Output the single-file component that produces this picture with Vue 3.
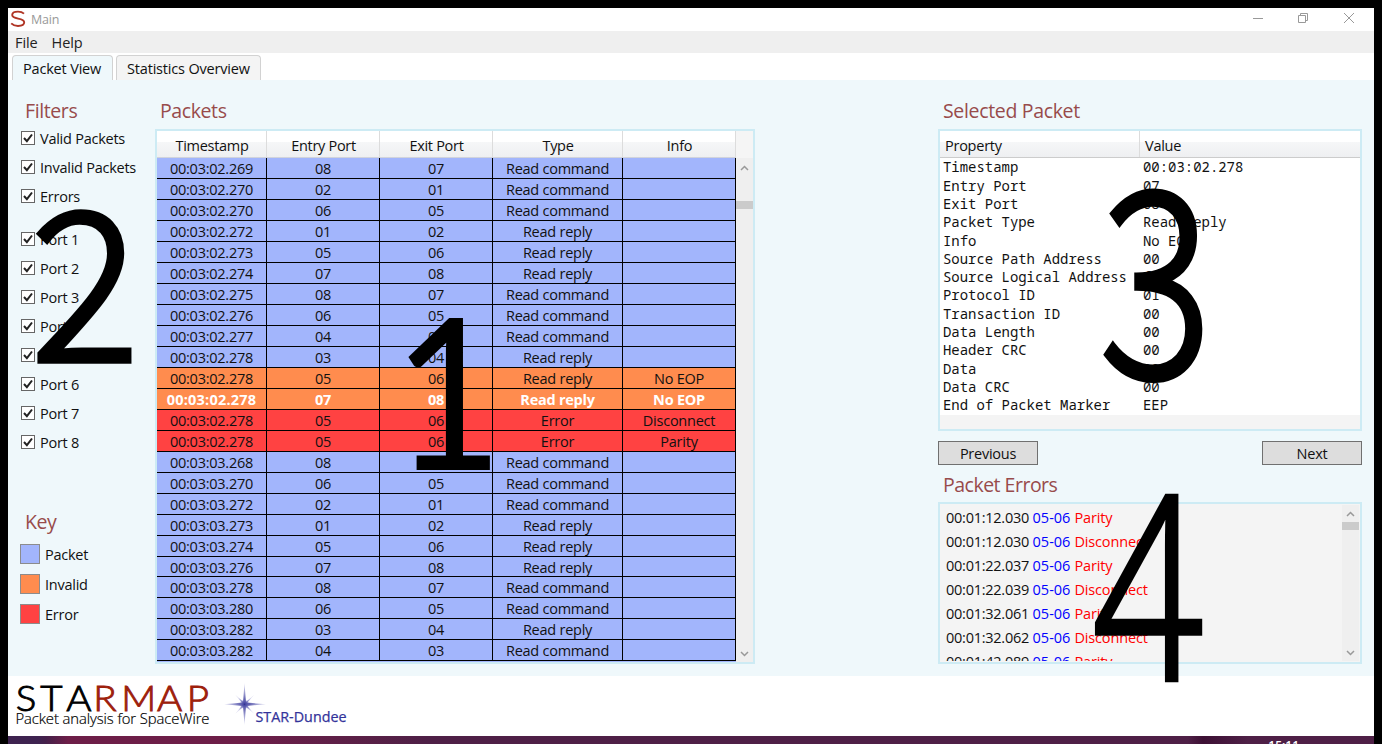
<script setup>
const filters = ['Valid Packets', 'Invalid Packets', 'Errors']
const ports = [1, 2, 3, 4, 5, 6, 7, 8].map((n) => `Port ${n}`)
const keys = [
  { label: 'Packet', kind: 'packet' },
  { label: 'Invalid', kind: 'invalid' },
  { label: 'Error', kind: 'error' },
]
const headers = ['Timestamp', 'Entry Port', 'Exit Port', 'Type', 'Info']
const C = 'Read command'
const R = 'Read reply'
const packets = [
  ['02.269', '08', '07', C],
  ['02.270', '02', '01', C],
  ['02.270', '06', '05', C],
  ['02.272', '01', '02', R],
  ['02.273', '05', '06', R],
  ['02.274', '07', '08', R],
  ['02.275', '08', '07', C],
  ['02.276', '06', '05', C],
  ['02.277', '04', '03', C],
  ['02.278', '03', '04', R],
  ['02.278', '05', '06', R, 'No EOP', 'invalid'],
  ['02.278', '07', '08', R, 'No EOP', 'invalid selected'],
  ['02.278', '05', '06', 'Error', 'Disconnect', 'error'],
  ['02.278', '05', '06', 'Error', 'Parity', 'error'],
  ['03.268', '08', '07', C],
  ['03.270', '06', '05', C],
  ['03.272', '02', '01', C],
  ['03.273', '01', '02', R],
  ['03.274', '05', '06', R],
  ['03.276', '07', '08', R],
  ['03.278', '08', '07', C],
  ['03.280', '06', '05', C],
  ['03.282', '03', '04', R],
  ['03.282', '04', '03', C],
].map(([t, a, b, type, info = '', kind = 'packet']) => ({ cells: ['00:03:' + t, a, b, type, info], kind }))
const props = [
  ['Timestamp', '00:03:02.278'],
  ['Entry Port', '07'],
  ['Exit Port', '08'],
  ['Packet Type', 'Read reply'],
  ['Info', 'No EOP'],
  ['Source Path Address', '00'],
  ['Source Logical Address', 'fe'],
  ['Protocol ID', '01'],
  ['Transaction ID', '00'],
  ['Data Length', '00'],
  ['Header CRC', '00'],
  ['Data', '00'],
  ['Data CRC', '00'],
  ['End of Packet Marker', 'EEP'],
]
const errors = [
  ['00:01:12.030', 'Parity'],
  ['00:01:12.030', 'Disconnect'],
  ['00:01:22.037', 'Parity'],
  ['00:01:22.039', 'Disconnect'],
  ['00:01:32.061', 'Parity'],
  ['00:01:32.062', 'Disconnect'],
  ['00:01:42.089', 'Parity'],
]
</script>

<template>
  <div class="screen">
    <div class="window">
      <header class="titlebar">
        <svg class="app-icon" width="16" height="18" viewBox="0 0 16 18">
          <path d="M14 3.6C12.500 2.200 10.400 1.600 8 1.600C4.500 1.600 2.200 3 2.200 5C2.200 9.800 14.200 7.400 14.200 12.300C14.200 14.500 11.700 16 8 16C5.200 16 2.900 15.100 1.200 13.400" fill="none" stroke="#b03525" stroke-width="1.900" />
        </svg>
        <span class="title">Main</span>
        <svg class="controls" width="110" height="20" viewBox="0 0 110 20" fill="none" stroke="#999">
          <path d="M3 10.500H13" />
          <path d="M48.500 7.500H55.500V14.500H48.500ZM50.500 7V5.500H57.500V12.500H56" />
          <path d="M94 5L104 15M104 5L94 15" />
        </svg>
      </header>
      <nav class="menu"><span>File</span><span>Help</span></nav>
      <div class="tabs">
        <div class="tab active">Packet View</div>
        <div class="tab second">Statistics Overview</div>
      </div>

      <main class="content">
        <aside class="side">
          <h2>Filters</h2>
          <div class="checks">
            <label v-for="f in filters" :key="f" class="check">
              <svg width="14" height="14" viewBox="0 0 14 14"><rect x=".5" y=".5" width="13" height="13" fill="#fff" stroke="#666" /><path d="M3 7L5.900 10.200L11 3.500" fill="none" stroke="#222" stroke-width="2" /></svg>
              <span>{{ f }}</span>
            </label>
          </div>
          <div class="checks ports">
            <label v-for="f in ports" :key="f" class="check">
              <svg width="14" height="14" viewBox="0 0 14 14"><rect x=".5" y=".5" width="13" height="13" fill="#fff" stroke="#666" /><path d="M3 7L5.900 10.200L11 3.500" fill="none" stroke="#222" stroke-width="2" /></svg>
              <span>{{ f }}</span>
            </label>
          </div>
          <h2 class="key-title">Key</h2>
          <div class="keys">
            <div v-for="k in keys" :key="k.label" class="key"><i :class="k.kind"></i><span>{{ k.label }}</span></div>
          </div>
        </aside>

        <section class="packets">
          <h2>Packets</h2>
          <div class="frame packet-frame">
            <div class="grid">
              <div class="row head"><div v-for="h in headers" :key="h">{{ h }}</div></div>
              <div v-for="(p, i) in packets" :key="i" class="row" :class="p.kind">
                <div v-for="(c, j) in p.cells" :key="j">{{ c }}</div>
              </div>
            </div>
            <div class="scroll">
              <div class="scroll-top"></div>
              <svg class="arrow" width="9" height="6" viewBox="0 0 9 6"><path d="M1 5L4.500 1.500L8 5" fill="none" stroke="#999" stroke-width="1.500" /></svg>
              <div class="thumb far"></div>
              <svg class="arrow down" width="9" height="6" viewBox="0 0 9 6"><path d="M1 1L4.500 4.500L8 1" fill="none" stroke="#999" stroke-width="1.500" /></svg>
            </div>
          </div>
        </section>

        <section class="details">
          <h2>Selected Packet</h2>
          <div class="frame prop-frame">
            <div class="prop-head"><span>Property</span><span>Value</span></div>
            <div class="prop-body">
              <div v-for="p in props" :key="p[0]" class="prop"><span>{{ p[0] }}</span><span>{{ p[1] }}</span></div>
            </div>
          </div>
          <div class="buttons"><button>Previous</button><button>Next</button></div>
          <h2 class="err-title">Packet Errors</h2>
          <div class="frame err-frame">
            <div class="err-list">
              <div v-for="(e, i) in errors" :key="i" class="err">{{ e[0] }} <b>05-06</b> <em>{{ e[1] }}</em></div>
            </div>
            <div class="scroll err-scroll">
              <svg class="arrow" width="9" height="6" viewBox="0 0 9 6"><path d="M1 5L4.500 1.500L8 5" fill="none" stroke="#999" stroke-width="1.500" /></svg>
              <div class="thumb"></div>
              <svg class="arrow down" width="9" height="6" viewBox="0 0 9 6"><path d="M1 1L4.500 4.500L8 1" fill="none" stroke="#999" stroke-width="1.500" /></svg>
            </div>
          </div>
        </section>
      </main>

      <footer class="footer">
        <svg width="360" height="60" viewBox="8 676 360 60">
          <defs>
            <radialGradient id="glow"><stop offset="0" stop-color="#2a2a90" /><stop offset=".3" stop-color="#5050a8" stop-opacity=".8" /><stop offset="1" stop-color="#8080c8" stop-opacity=".25" /></radialGradient>
          </defs>
          <g transform="scale(1.1 1)">
            <text class="logo" x="14.300 36.600 60.300" y="711">STA</text>
            <text class="logo red" x="84.800 110.300 142.700 169.700" y="711">RMAP</text>
          </g>
          <text class="tagline" x="15.500" y="724.300" textLength="194">Packet analysis for SpaceWire</text>
          <g fill="url(#glow)">
            <path d="M244.500 683L246 702.500L266 704.200L246 706L244.500 725L243 706L224 704.200L243 702.500Z" />
            <path d="M235.500 695L244.800 702.700L254 695L246 704.200L254 713.500L244.500 706L235.500 713.500L243 704.200Z" />
            <circle cx="244.500" cy="704.200" r="4.500" />
          </g>
          <text class="dundee" x="255.500" y="721.500" textLength="91" lengthAdjust="spacingAndGlyphs">STAR-Dundee</text>
        </svg>
      </footer>
      <div class="taskbar"><span class="clock">15:11</span></div>
    </div>

    <svg class="marks" width="1382" height="744" viewBox="0 0 1382 744">
      <text class="one" transform="translate(448 470) scale(.9 1)" font-size="212">1</text>
      <text transform="translate(31 360.500) scale(.965 .99)" font-size="209">2</text>
      <text transform="translate(1099.500 377) scale(.825 1.01)" font-size="255">3</text>
      <text class="four" transform="translate(1092.500 679) scale(.755 .995)" font-size="256">4</text>
    </svg>
  </div>
</template>

<style>
body { margin: 0; background: #000; overflow: hidden; }
</style>

<style scoped>
.screen { position: relative; width: 1382px; height: 744px; box-sizing: border-box; padding: 8px 8px 0; background: #000; overflow: hidden; font: 14.5px/20px "Open Sans", "Noto Sans", sans-serif; letter-spacing: -.25px; color: #111; }
.screen * { box-sizing: border-box; }
.window { width: 1366px; height: 736px; display: flex; flex-direction: column; background: #fff; }
.titlebar { height: 23px; display: flex; align-items: flex-start; padding-left: 2px; }
.app-icon { margin-top: 2px; }
.title { margin: 2px 0 0 5px; font-size: 12.5px; color: #999; letter-spacing: -.2px; }
.controls { margin-left: auto; margin-right: 14px; }
.menu { height: 22px; background: #efefef; padding-left: 7px; display: flex; gap: 14px; line-height: 24px; color: #222; letter-spacing: -.1px; }
.tabs { height: 27px; padding: 2px 0 0 4px; display: flex; gap: 4px; }
.tab { border: 1px solid #d2d2d2; border-bottom: 0; border-radius: 4px 4px 0 0; background: #f4f4f4; padding-left: 10px; width: 145px; line-height: 26px; white-space: nowrap; letter-spacing: -.18px; }
.tab.active { width: 101px; background: #eff8fb; }
.tab.second { margin-left: -1px; }
.content { height: 596px; background: #eff8fb; display: flex; padding-top: 18px; }
h2 { margin: 0; font-size: 19.500px; line-height: 26px; font-weight: 400; color: #984b4b; letter-spacing: -.4px; }
.side { width: 147px; padding-left: 12px; }
.side h2 { padding-left: 5px; }
.checks { padding: 0 0 0 1px; margin-top: 2px; }
.check { height: 29px; display: flex; gap: 5px; align-items: flex-start; white-space: nowrap; padding-top: 5px; }
.check span { line-height: 20px; margin-top: -2px; }
.check svg { flex: none; }
.ports { margin-top: 14px; }
.key-title { margin-top: 50px; }
.keys { padding-top: 4px; }
.key { display: flex; gap: 5px; height: 30px; align-items: center; line-height: 20px; }
.key span { padding-top: 2px; }
.key i { width: 20px; height: 20px; border: 1px solid #8c8c8c; }
.packet { background: #a2b5fc; }
.invalid { background: #ff8c4e; }
.error { background: #ff4242; }
.packets { width: 600px; }
.packets h2 { padding-left: 5px; }
.frame { border: 2px solid #cdebf4; margin-top: 5px; background: #fff; display: flex; }
.packet-frame { height: 535px; }
.grid { width: 579px; overflow: hidden; background: #a2b5fc; }
.row { display: grid; grid-template-columns: 110px 113px 113px 130px 113px; height: 20.957px; text-align: center; line-height: 22.4px; border-bottom: 1px solid #000; }
.row > div { border-right: 1px solid #000; height: 20.957px; white-space: nowrap; }
.row.head { height: 27.4px; border-bottom: 1px solid #d0d3dc; line-height: 29px; background: linear-gradient(#fff 0 42%, #f6f7f8 43%, #eeeff1); }
.row.head > div { border-right: 1px solid #dcdcdc; height: 26px; letter-spacing: -.3px; padding-left: 1px; }
.row.selected { color: #fff; font-weight: 700; letter-spacing: -.25px; }
.row.selected > div:first-child { letter-spacing: .2px; }
.scroll { width: 17px; background: #efefef; display: flex; flex-direction: column; align-items: center; }
.scroll-top { height: 27px; width: 100%; background: #f5f5f5; }
.arrow { margin-top: 7px; flex: none; }
.thumb { height: 8px; width: 100%; background: #cbcbcb; margin-top: 5px; flex: none; }
.thumb.far { margin-top: 30px; }
.arrow.down { margin-top: auto; margin-bottom: 5px; }
.details { width: 424px; margin-left: 183px; }
.details h2 { padding-left: 5px; letter-spacing: -.33px; }
.prop-frame { height: 302px; flex-direction: column; background: #f4f4f4; }
.prop-head { height: 27px; display: flex; border-bottom: 1px solid #ccc; background: linear-gradient(#fff 0 42%, #f6f7f8 43%, #eeeff1); line-height: 29px; }
.prop-head span { padding-left: 5px; }
.prop-head span:first-child { width: 200px; border-right: 1px solid #dcdcdc; }
.prop-body { height: 257px; background: #fff; font: 13.950px/18.320px "Noto Sans Mono", "DejaVu Sans Mono", monospace; letter-spacing: 0; padding-top: .3px; }
.prop { display: grid; grid-template-columns: 200px 1fr; padding-left: 3px; height: 18.320px; white-space: pre; }
.buttons { display: flex; justify-content: space-between; margin-top: 10px; }
button { width: 100px; height: 24px; border: 1px solid #707070; background: #ddd; padding: 1px 0 0; font: inherit; letter-spacing: inherit; color: inherit; }
.err-title { margin-top: 7px; }
.details h2.err-title { letter-spacing: -.5px; }
.err-frame { height: 162px; background: #f4f4f4; padding: 1px 1px 1px 0; }
.err-title + .err-frame { margin-top: 4px; }
.err-list { flex: 1; padding: 1px 0 0 6px; overflow: hidden; line-height: 24px; }
.err { height: 24px; white-space: nowrap; }
.err b { font-weight: 400; color: #00f; letter-spacing: 0; }
.err em { font-style: normal; color: #f00; letter-spacing: -.15px; margin-left: .5px; }
.err-scroll { width: 17px; }
.err-scroll .arrow:first-child { margin-top: 6px; }
.footer { height: 60px; background: #fff; }
.footer svg { display: block; }
.logo { font: 300 35px Lato, sans-serif; letter-spacing: 0; fill: #000; stroke: #000; stroke-width: .9px; }
.logo.red { fill: #9d200b; stroke: #9d200b; }
.tagline { font: 300 14.800px "Open Sans", sans-serif; letter-spacing: 0; fill: #000; stroke: #000; stroke-width: .2px; }
.dundee { font: 14.500px "Open Sans", sans-serif; letter-spacing: 0; fill: #33339a; stroke: #33339a; stroke-width: .25px; }
.taskbar { height: 8px; flex: none; overflow: hidden; background: linear-gradient(90deg, #3e2350 0 30px, #45204a 38px, #6d1e48 60px, #6d1e48 240px, #4e2046 420px, #4e2046 1180px, #3d1034 1195px, #4e2046 1240px); display: flex; justify-content: flex-end; }
.clock { margin: 2px 75px 0 0; color: #fff; font-size: 12px; line-height: 16px; font-weight: 600; letter-spacing: 0; }
.marks { position: absolute; left: 0; top: 0; pointer-events: none; font-family: "Noto Sans CJK SC", sans-serif; font-weight: 300; letter-spacing: 0; fill: #000; stroke: #000; stroke-width: 5.500px; }
.one { font-family: Lato, sans-serif; font-weight: 400; stroke: none; text-anchor: middle; }
.four { font-family: "Open Sans", sans-serif; }
</style>
